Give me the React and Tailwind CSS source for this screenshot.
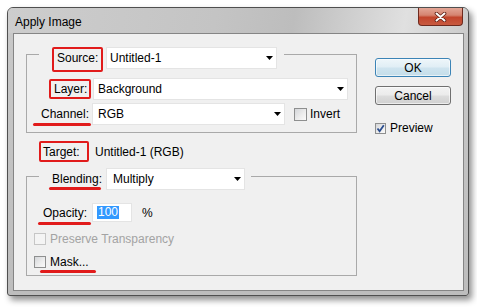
import React from "react";

function Arrow() {
  return (
    <svg width="7" height="4" viewBox="0 0 7 4" className="shrink-0">
      <path d="M0 0H7L3.5 4Z" fill="#000" />
    </svg>
  );
}

function Dropdown({ className, text }) {
  return (
    <div
      className={
        "h-[22px] bg-white border border-[#e4e4e4] flex items-center justify-between pr-[3px] text-[12px] leading-[14px] text-black " +
        className
      }
    >
      <span>{text}</span>
      <Arrow />
    </div>
  );
}

function Check({ disabled, checked, className = "" }) {
  return (
    <div
      className={
        "flex items-center justify-center border " +
        (disabled
          ? "border-[#c6c6c6] bg-[#f4f4f4] "
          : "border-[#8e8f8f] bg-[linear-gradient(135deg,#d4d6d9_0%,#eeeeee_60%,#fafafa_100%)] ") +
        className
      }
    >
      {checked && (
        <svg width="9" height="9" viewBox="0 0 9 9">
          <path d="M1.5 4.5L3.6 7.2L7.8 1.2" stroke="#2a4d8f" strokeWidth="1.8" fill="none" />
        </svg>
      )}
    </div>
  );
}

function Underline({ className }) {
  return <span className={"absolute h-[3px] rounded-full bg-[#e11b1b] " + className} />;
}

export default function App() {
  return (
    <div className="w-[477px] h-[307px] bg-white overflow-hidden pt-[7px] pl-[7px] font-['Liberation_Sans',Arial,sans-serif] text-black">
      <div className="w-[462px] h-[289px] rounded-t-[6px] rounded-b-[3px] border border-[#4f4f4f] bg-[linear-gradient(to_bottom,#c9c9c9,#bdbdbd)] shadow-[3px_4px_6px_rgba(0,0,0,0.45)] flex flex-col">
        {/* title bar */}
        <div className="h-[25px] shrink-0 flex items-start justify-between rounded-t-[5px] bg-[linear-gradient(100deg,#cdcdcd_0%,#c4c4c4_45%,#bdbdbd_62%,#e0e0e0_86%,#cbcbcb_100%)]">
          <span className="ml-[7px] mt-[6px] text-[12px] leading-[16px] text-black">Apply Image</span>
          <div className="mr-[5px] w-[45px] h-[18px] rounded-b-[4px] border border-t-0 border-[#6e2a1e] bg-[linear-gradient(to_bottom,#e3a696_0%,#d58470_42%,#c2452c_55%,#c85a40_100%)] flex items-center justify-center">
            <svg width="13" height="10" viewBox="0 0 13 10">
              <path d="M2.5 1.5L10.5 8.5M10.5 1.5L2.5 8.5" stroke="#5b1d12" strokeWidth="3.6" strokeLinecap="round" />
              <path d="M2.5 1.5L10.5 8.5M10.5 1.5L2.5 8.5" stroke="#ffffff" strokeWidth="2" strokeLinecap="round" />
            </svg>
          </div>
        </div>

        {/* client area */}
        <div className="flex-1 ml-[5px] mr-[4px] mb-[4px] border border-[#858585] bg-[#f0f0f0] flex">
          {/* left column */}
          <div className="pl-[12px] flex flex-col">
            {/* group 1 */}
            <div className="mt-[20px] w-[331px] h-[79px] border border-[#a9a9a9] flex flex-col">
              <div className="-mt-[8px] ml-[12px] self-start bg-[#f0f0f0] pl-[13px] pr-[7px] flex items-start gap-[3px]">
                <div className="w-[51px] h-[25px] border-2 border-[#e11b1b] rounded-[2px] pl-[3px] pb-[3px] flex items-center text-[12px] leading-[14px]">
                  Source:
                </div>
                <Dropdown className="w-[171px] pl-[3px]" text="Untitled-1" />
              </div>
              <div className="mt-[6px] ml-[22px] flex items-center gap-[2px]">
                <div className="w-[42px] h-[20px] border-2 border-[#e11b1b] rounded-[2px] pl-[3px] flex items-center text-[12px] leading-[14px]">
                  Layer:
                </div>
                <Dropdown className="w-[255px] pl-[4px]" text="Background" />
              </div>
              <div className="mt-[3px] ml-[6px] flex items-center">
                <div className="relative w-[59px] h-[22px] pl-[8px] flex items-center text-[12px] leading-[14px]">
                  Channel:
                  <Underline className="left-0 w-[58px] top-[20px]" />
                </div>
                <Dropdown className="w-[193px] pl-[5px]" text="RGB" />
                <Check className="ml-[9px] w-[13px] h-[13px]" />
                <span className="ml-[3px] text-[12px] leading-[14px]">Invert</span>
              </div>
            </div>

            {/* target */}
            <div className="mt-[8px] ml-[13px] flex items-center">
              <div className="w-[50px] h-[21px] border-2 border-[#e11b1b] rounded-[2px] pl-[2px] flex items-center text-[12px] leading-[14px]">
                Target:
              </div>
              <span className="ml-[6px] text-[12px] leading-[14px]">Untitled-1 (RGB)</span>
            </div>

            {/* group 2 */}
            <div className="mt-[14px] w-[331px] h-[100px] border border-[#a9a9a9] flex flex-col">
              <div className="-mt-[9px] ml-[12px] self-start bg-[#f0f0f0] pl-[10px] pr-[6px] flex items-center">
                <div className="relative w-[57px] h-[22px] pl-[3px] flex items-center text-[12px] leading-[14px]">
                  Blending:
                  <Underline className="left-0 w-[52px] top-[19px]" />
                </div>
                <Dropdown className="w-[139px] pl-[6px]" text="Multiply" />
              </div>
              <div className="mt-[13px] ml-[11px] flex items-center">
                <div className="relative w-[54px] h-[19px] pl-[5px] flex items-center text-[12px] leading-[14px]">
                  Opacity:
                  <Underline className="left-0 w-[53px] top-[19px]" />
                </div>
                <div className="w-[40px] h-[19px] bg-white border border-[#e4e4e4] pl-[4px] flex items-center">
                  <span className="bg-[#3399ff] text-white text-[12px] leading-[13px] px-[1px]">100</span>
                </div>
                <span className="ml-[10px] text-[12px] leading-[14px]">%</span>
              </div>
              <div className="mt-[10px] ml-[7px] flex items-center">
                <Check disabled className="w-[12px] h-[12px]" />
                <span className="ml-[4px] text-[12px] leading-[14px] text-[#a3a3a3]">Preserve Transparency</span>
              </div>
              <div className="relative mt-[9px] ml-[7px] flex items-center">
                <Check className="w-[12px] h-[12px]" />
                <span className="ml-[4px] text-[12px] leading-[14px]">Mask...</span>
                <Underline className="left-[6px] w-[56px] top-[15px]" />
              </div>
            </div>
          </div>

          {/* right column */}
          <div className="ml-[18px] flex flex-col">
            <div className="mt-[24px] w-[76px] h-[19px] rounded-[3px] border border-[#3c84b6] bg-[linear-gradient(to_bottom,#eef6fa_0%,#e0eef5_48%,#cfe4ef_52%,#c4dde9_100%)] shadow-[inset_0_0_0_1px_rgba(255,255,255,0.6)] flex items-center justify-center text-[12px] leading-[14px]">
              OK
            </div>
            <div className="mt-[9px] w-[76px] h-[19px] rounded-[3px] border border-[#707070] bg-[linear-gradient(to_bottom,#f3f3f3_0%,#ebebeb_48%,#dddddd_52%,#d0d0d0_100%)] shadow-[inset_0_0_0_1px_rgba(255,255,255,0.6)] flex items-center justify-center text-[12px] leading-[14px]">
              Cancel
            </div>
            <div className="mt-[16px] flex items-center">
              <Check checked className="w-[11px] h-[11px]" />
              <span className="ml-[4px] text-[12px] leading-[14px]">Preview</span>
            </div>
          </div>
        </div>
      </div>
    </div>
  );
}
